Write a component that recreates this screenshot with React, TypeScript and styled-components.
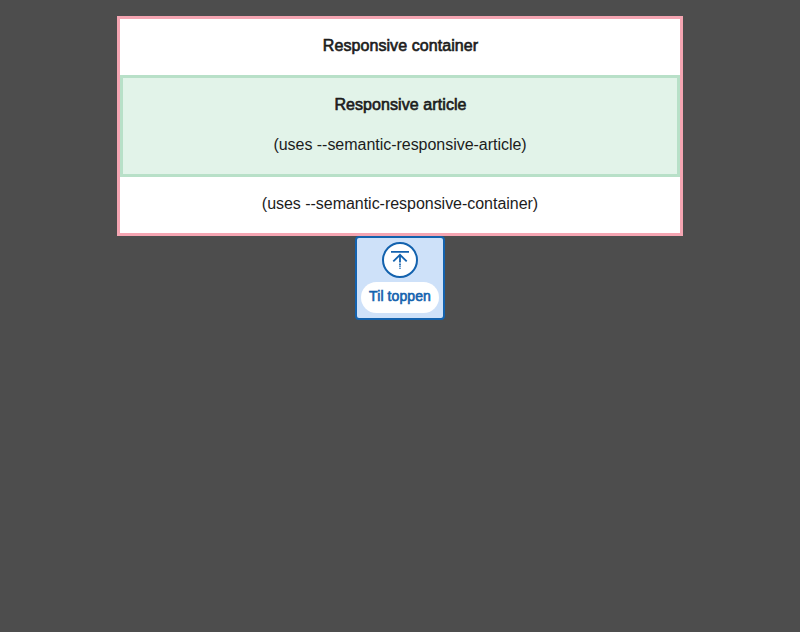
import React from "react";
import styled, { createGlobalStyle } from "styled-components";

const GlobalStyle = createGlobalStyle`
  body {
    margin: 0;
    background: #4d4d4d;
    color: #1c1c1c;
    font: 16px/24px "Liberation Sans", Arial, sans-serif;
  }
`;

const Page = styled.main`
  display: flex;
  flex-direction: column;
  align-items: center;
  padding-top: 16px;
`;

const Container = styled.section`
  box-sizing: border-box;
  width: 566px;
  border: 3px solid #f5a5b2;
  background: #fff;
  text-align: center;
`;

const Article = styled.article`
  border: 3px solid #b8e0c8;
  background: #e2f3e9;
`;

const Text = styled.p<{ $strong?: boolean }>`
  margin: 0;
  padding: 15px 0 17px;
  letter-spacing: ${(p) => (p.$strong ? "0.08px" : "-0.03px")};
  -webkit-text-stroke: ${(p) => (p.$strong ? "0.65px currentColor" : "0")};
  text-indent: ${(p) => (p.$strong ? "1px" : "0")};

  & + & {
    margin-top: -16px;
  }
`;

const TopButton = styled.button`
  box-sizing: border-box;
  width: 90px;
  height: 84px;
  padding: 4px;
  display: flex;
  flex-direction: column;
  align-items: center;
  gap: 4px;
  border: 2px solid #1362ae;
  border-radius: 4px;
  background: #cee1f9;
  color: #1362ae;
  font: inherit;
`;

const IconCircle = styled.span`
  box-sizing: border-box;
  width: 36px;
  height: 36px;
  display: grid;
  place-items: center;
  border: 2px solid currentColor;
  border-radius: 50%;
  background: #fff;
`;

const ButtonLabel = styled.span`
  box-sizing: border-box;
  width: 78px;
  height: 31px;
  flex: none;
  padding-bottom: 2px;
  border-radius: 16px;
  background: #fff;
  font-size: 14px;
  line-height: 29px;
  white-space: nowrap;
  letter-spacing: 0.08px;
  -webkit-text-stroke: 0.6px currentColor;
`;

function ArrowToTop() {
  return (
    <svg width="20" height="20" viewBox="0 0 20 20" fill="none" stroke="currentColor" strokeWidth="1.8" aria-hidden="true">
      <path d="M1 1.9h18M3.3 11.4 10 4.8l6.7 6.6M10 5v7.5" />
      <path d="M10 13.5v2M10 16.3v1M10 18.2v.8" strokeWidth="1.7" />
    </svg>
  );
}

export default function App() {
  return (
    <>
      <GlobalStyle />
      <Page>
        <Container>
          <Text $strong>Responsive container</Text>
          <Article>
            <Text $strong>Responsive article</Text>
            <Text>(uses --semantic-responsive-article)</Text>
          </Article>
          <Text>(uses --semantic-responsive-container)</Text>
        </Container>
        <TopButton type="button">
          <IconCircle>
            <ArrowToTop />
          </IconCircle>
          <ButtonLabel>Til toppen</ButtonLabel>
        </TopButton>
      </Page>
    </>
  );
}
